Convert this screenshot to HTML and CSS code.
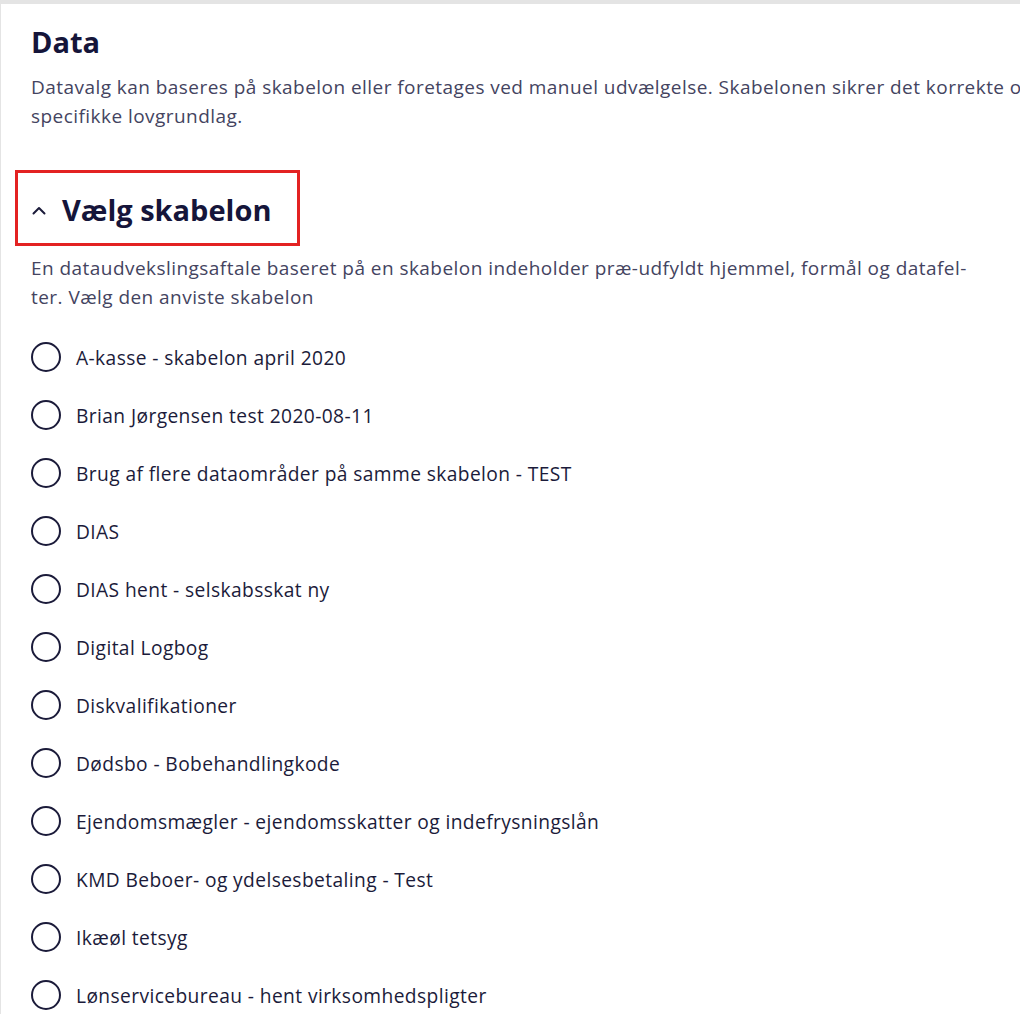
FILE: index.html
```html
<!DOCTYPE html>
<html lang="da">
<head>
<meta charset="utf-8">
<title>Data</title>
<link rel="stylesheet" href="styles.css">
</head>
<body>
<div class="page">
  <section class="content">
    <h1 class="title">Data</h1>
    <p class="lead">
      <span class="line">Datavalg kan baseres på skabelon eller foretages ved manuel udvælgelse. Skabelonen sikrer det korrekte og</span>
      <span class="line">specifikke lovgrundlag.</span>
    </p>

    <div class="accordion">
      <h2 class="acc-head">
        <svg class="chevron" width="14" height="9" viewBox="0 0 14 9" aria-hidden="true">
          <path d="M1.5 7.5 L7 2 L12.5 7.5" fill="none" stroke="#1b1b3a" stroke-width="2" stroke-linecap="round" stroke-linejoin="round"/>
        </svg>
        <span>Vælg skabelon</span>
      </h2>
      <p class="desc">
        <span class="line">En dataudvekslingsaftale baseret på en skabelon indeholder præ-udfyldt hjemmel, formål og datafel-</span>
        <span class="line">ter. Vælg den anviste skabelon</span>
      </p>
      <ul class="radios">
        <li class="radio"><span class="circle"></span><span class="label">A-kasse - skabelon april 2020</span></li>
        <li class="radio"><span class="circle"></span><span class="label">Brian Jørgensen test 2020-08-11</span></li>
        <li class="radio"><span class="circle"></span><span class="label">Brug af flere dataområder på samme skabelon - TEST</span></li>
        <li class="radio"><span class="circle"></span><span class="label">DIAS</span></li>
        <li class="radio"><span class="circle"></span><span class="label">DIAS hent - selskabsskat ny</span></li>
        <li class="radio"><span class="circle"></span><span class="label">Digital Logbog</span></li>
        <li class="radio"><span class="circle"></span><span class="label">Diskvalifikationer</span></li>
        <li class="radio"><span class="circle"></span><span class="label">Dødsbo - Bobehandlingkode</span></li>
        <li class="radio"><span class="circle"></span><span class="label">Ejendomsmægler - ejendomsskatter og indefrysningslån</span></li>
        <li class="radio"><span class="circle"></span><span class="label">KMD Beboer- og ydelsesbetaling - Test</span></li>
        <li class="radio"><span class="circle"></span><span class="label">Ikæøl tetsyg</span></li>
        <li class="radio"><span class="circle"></span><span class="label">Lønservicebureau - hent virksomhedspligter</span></li>
      </ul>
    </div>
  </section>
</div>
</body>
</html>
```

FILE: styles.css
```css
html, body {
  margin: 0;
  padding: 0;
  background: #ffffff;
  overflow: hidden;
}

body {
  font-family: "Open Sans", "Liberation Sans", sans-serif;
  color: #1b1b3a;
}

.page {
  border-top: 4px solid #e4e4e4;
  border-left: 1px solid #e4e4e4;
  min-height: 1010px;
}

.content {
  padding: 20px 0 0 30px;
}

.title {
  margin: 0;
  font-size: 29px;
  line-height: 36px;
  font-weight: 700;
  color: #15153a;
}

.lead,
.desc {
  margin: 13px 0 0;
  font-size: 19px;
  line-height: 29px;
  letter-spacing: 0.45px;
  color: #44445f;
}

.line {
  display: block;
  white-space: nowrap;
}

.accordion {
  margin-top: 39px;
}

.acc-head {
  box-sizing: border-box;
  width: 285px;
  height: 76px;
  margin: 0 0 0 -16px;
  padding: 19px 0 0 14px;
  border: 3px solid #e32222;
  display: flex;
  align-items: flex-start;
  gap: 16px;
  font-size: 29px;
  line-height: 36px;
  font-weight: 700;
  color: #15153a;
}

.chevron {
  margin-top: 14px;
  flex: none;
}

.desc {
  margin-top: 8px;
}

.radios {
  list-style: none;
  margin: 16px 0 0;
  padding: 0;
}

.radio {
  height: 58px;
  display: flex;
  align-items: center;
  gap: 15px;
}

.circle {
  box-sizing: border-box;
  width: 30px;
  height: 30px;
  border: 2px solid #1b1b3a;
  border-radius: 50%;
  flex: none;
}

.label {
  font-size: 19.2px;
  letter-spacing: 0.4px;
  color: #1b1b3a;
}
```
